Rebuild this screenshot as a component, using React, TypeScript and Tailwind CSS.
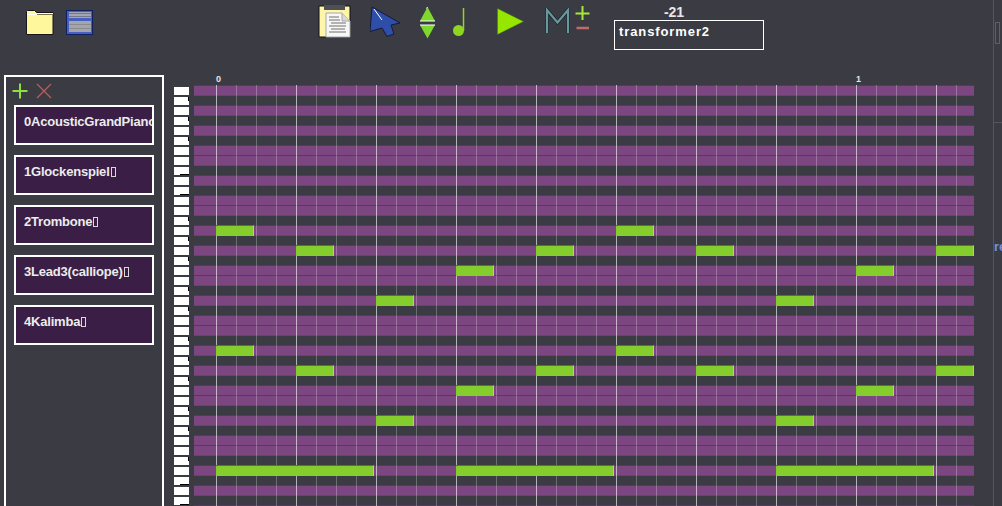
type Note = { row: number; start: number; len: number };

const tracks = [
  "0AcousticGrandPiano",
  "1Glockenspiel",
  "2Trombone",
  "3Lead3(calliope)",
  "4Kalimba",
];

// one octave of the roll, top down; true = playable row
const octave = [true, false, true, false, true, false, true, true, false, true, false, true];
const rows = Array.from({ length: 43 }, (_, i) => octave[i % 12]);

// start and len are in 20px grid cells from the "0" bar line
const notes: Note[] = [
  { row: 14, start: 0, len: 2 },
  { row: 14, start: 20, len: 2 },
  { row: 16, start: 4, len: 2 },
  { row: 16, start: 16, len: 2 },
  { row: 16, start: 24, len: 2 },
  { row: 16, start: 36, len: 2 },
  { row: 18, start: 12, len: 2 },
  { row: 18, start: 32, len: 2 },
  { row: 21, start: 8, len: 2 },
  { row: 21, start: 28, len: 2 },
  { row: 26, start: 0, len: 2 },
  { row: 26, start: 20, len: 2 },
  { row: 28, start: 4, len: 2 },
  { row: 28, start: 16, len: 2 },
  { row: 28, start: 24, len: 2 },
  { row: 28, start: 36, len: 2 },
  { row: 30, start: 12, len: 2 },
  { row: 30, start: 32, len: 2 },
  { row: 33, start: 8, len: 2 },
  { row: 33, start: 28, len: 2 },
  { row: 38, start: 0, len: 8 },
  { row: 38, start: 12, len: 8 },
  { row: 38, start: 28, len: 8 },
];

// small black marks left on the piano keys
const sideMarks = [1, 3, 5, 13, 15, 17, 20, 22, 25, 27, 29, 32, 34, 37];
const lowMarks = [8, 10, 39, 41];

function FolderIcon() {
  return (
    <svg width="28" height="25" viewBox="0 0 28 25" className="mt-[10px] ml-[26px] shrink-0">
      <path d="M0.500 24.500V1.500l1-1h7l2 2h16.500v22z" fill="#fff79c" stroke="#15151a" strokeWidth="1" />
      <path d="M1 4.500h8l2-1h16" fill="none" stroke="#fff" strokeWidth="1" />
      <path d="M11 4.500h16" stroke="#77704a" strokeWidth="1" />
    </svg>
  );
}

function SaveIcon() {
  return (
    <svg width="27" height="25" viewBox="0 0 27 25" className="mt-[10px] ml-[12px] shrink-0">
      <rect x="0.500" y="0.500" width="26" height="24" fill="#4560c0" stroke="#0e2060" />
      <rect x="3" y="2" width="22" height="6" fill="#a2a6b4" />
      <path d="M3 3.500h22M3 6.500h22" stroke="#747888" strokeWidth="1" />
      <rect x="3" y="11" width="22" height="11" fill="#a4a4ac" />
      <path d="M3 14.500h22M3 18.500h22" stroke="#8a8a92" strokeWidth="1" />
    </svg>
  );
}

function ClipboardIcon() {
  return (
    <svg width="33" height="33" viewBox="0 0 33 33" className="mt-[5px] ml-[225px] shrink-0">
      <path d="M1 1h31v31H1z" fill="#fdf6a8" stroke="#111" strokeWidth="1" />
      <rect x="6" y="0" width="21" height="5" fill="#4f5056" />
      <path d="M8 8h16l8 8v16H8z" fill="#f7f7f7" stroke="#a8a8a8" strokeWidth="1" />
      <path d="M24 8v8h8" fill="#d8d8d8" stroke="#a8a8a8" strokeWidth="1" />
      <path d="M11 12h10M11 15h11M13 18h15M11 21h17M13 24h14M11 27h17" stroke="#6f6f6f" strokeWidth="1" />
    </svg>
  );
}

function PointerIcon() {
  return (
    <svg width="31" height="31" viewBox="0 0 31 31" className="mt-[6px] ml-[19px] shrink-0">
      <path d="M2 1l28 16-9 2 3 9-7 2.500-5-8.500-12 3.500z" fill="#2f4ea8" stroke="#131a3c" strokeWidth="1" />
      <path d="M4 3l8 11" stroke="#fff" strokeWidth="1" />
    </svg>
  );
}

function UpDownIcon() {
  return (
    <svg width="17" height="33" viewBox="0 0 17 33" className="mt-[6px] ml-[18px] shrink-0">
      <path d="M8.500 1L16 15H1z" fill="#7fd82c" />
      <path d="M1 15h15M8.500 1l-1 1.500" stroke="#fff" strokeWidth="1" />
      <path d="M1 19h15L8.500 32.500z" fill="#7fd82c" />
      <path d="M1 19h15" stroke="#fff" strokeWidth="1" />
    </svg>
  );
}

function NoteIcon() {
  return (
    <svg width="17" height="29" viewBox="0 0 17 29" className="mt-[8px] ml-[15px] shrink-0">
      <circle cx="7.500" cy="22.500" r="5.500" fill="#8fd620" />
      <path d="M12.500 0v23" stroke="#8fd620" strokeWidth="1.500" />
    </svg>
  );
}

function PlayIcon() {
  return (
    <svg width="27" height="27" viewBox="0 0 27 27" className="mt-[8px] ml-[29px] shrink-0">
      <path d="M0.500 0.500L26.500 13.500L0.500 26.500z" fill="#96e600" stroke="#3f7a10" strokeWidth="0.500" />
    </svg>
  );
}

function MuteIcon() {
  return (
    <svg width="25" height="25" viewBox="0 0 25 25" className="mt-[8px] ml-[21px] shrink-0">
      <path d="M2 25V2L12.500 14.500L23 2V25" fill="none" stroke="#16242a" strokeWidth="3.500" />
      <path d="M2 25V2L12.500 14.500L23 2V25" fill="none" stroke="#67989f" strokeWidth="2.200" />
    </svg>
  );
}

function PlusMinusIcon() {
  return (
    <svg width="15" height="25" viewBox="0 0 15 25" className="mt-[6px] ml-[5px] shrink-0">
      <path d="M7.500 0v14M0.500 7.500h14" stroke="#a5e838" strokeWidth="2" />
      <path d="M1.500 22h12.500" stroke="#c26a6a" strokeWidth="2.500" />
    </svg>
  );
}

function PianoKeys() {
  return (
    <div className="mt-[10px] ml-[10px] flex w-[15px] shrink-0 flex-col">
      {rows.map((_, i) => (
        <div key={i} className="h-[10px] pt-[2px]">
          <div
            className={`flex h-[8px] justify-end bg-white ${lowMarks.includes(i) ? "items-end" : "items-start"}`}
          >
            {sideMarks.includes(i) && <span className="h-[4px] w-[1px] bg-black" />}
            {lowMarks.includes(i) && <span className="h-[1px] w-[9px] bg-black" />}
          </div>
        </div>
      ))}
    </div>
  );
}

function PianoRoll() {
  return (
    <div className="ml-[5px] w-[780px] shrink-0">
      <div className="flex h-[10px] pl-[22px] text-[9px] leading-[9px] font-bold text-[#e6e6e6]">
        <span className="w-[640px]">0</span>
        <span>1</span>
      </div>
      <div className="grid overflow-hidden">
        <div className="[grid-area:1/1] flex flex-col">
          {rows.map((on, i) => (
            <div
              key={i}
              className={`h-[10px] border-t ${on ? "border-t-[#563a5e] bg-[#7c4680]" : "border-t-[#5c4a66]"}`}
            />
          ))}
        </div>
        <div className="[grid-area:1/1] flex pl-[22px]">
          {Array.from({ length: 38 }, (_, i) => (
            <div
              key={i}
              className={`w-[20px] shrink-0 border-l ${i % 4 === 0 ? "border-white/60" : "border-white/25"}`}
            />
          ))}
        </div>
        <div className="[grid-area:1/1] flex flex-col">
          {rows.map((_, i) => (
            <div key={i} className="grid h-[10px] grid-cols-[repeat(38,20px)] pl-[22px]">
              {notes
                .filter((n) => n.row === i)
                .map((n) => (
                  <div
                    key={n.start}
                    className="mr-[2px] h-[11px] border-t border-r border-t-[#4a7f20] border-r-[#b4cc90] bg-[#85cd2c]"
                    style={{ gridColumn: `${n.start + 1} / span ${n.len}` }}
                  />
                ))}
            </div>
          ))}
        </div>
      </div>
    </div>
  );
}

export default function App() {
  return (
    <div className="flex h-[506px] w-[1002px] overflow-hidden bg-[#3b3c43] [font-family:'Liberation_Sans',Arial,sans-serif] text-white">
      <div className="w-[993px] shrink-0">
        <div className="flex h-[75px] items-start">
          <FolderIcon />
          <SaveIcon />
          <ClipboardIcon />
          <PointerIcon />
          <UpDownIcon />
          <NoteIcon />
          <PlayIcon />
          <MuteIcon />
          <PlusMinusIcon />
          <div className="ml-[24px] w-[150px] shrink-0">
            <div className="h-[20px] pt-[4px] pr-[30px] text-center text-[14px] leading-[16px] font-bold text-[#e8e8e8]">
              -21
            </div>
            <div className="h-[30px] border-[1.5px] border-white pt-[3px] pl-[4px] text-[13px] leading-[16px] font-bold tracking-[0.9px]">
              transformer2
            </div>
          </div>
        </div>
        <div className="flex">
          <div className="ml-[4px] h-[440px] w-[160px] shrink-0 border-2 border-white">
            <div className="flex h-[28px] items-start pt-[6px] pl-[6px]">
              <svg width="16" height="16" viewBox="0 0 16 16" className="shrink-0">
                <path d="M8 0.500v15M0.500 8h15" stroke="#8ee03a" strokeWidth="2" />
              </svg>
              <svg width="16" height="16" viewBox="0 0 16 16" className="ml-[8px] shrink-0">
                <path d="M1 1l14 14M15 1L1 15" stroke="#b85c5c" strokeWidth="1.300" />
              </svg>
            </div>
            <div className="flex flex-col gap-[10px] pl-[8px]">
              {tracks.map((name, i) => (
                <div
                  key={name}
                  className="h-[40px] w-[140px] overflow-hidden border-2 border-white bg-[#3a1e45] pt-[7px] pl-[8px] text-[13px] leading-[15px] font-bold tracking-[-0.2px] whitespace-nowrap text-[#ececec]"
                >
                  {name}
                  {i > 0 && (
                    <span className="ml-[1px] inline-block h-[10px] w-[5px] border border-[#d8d8d8] align-[-1px]" />
                  )}
                </div>
              ))}
            </div>
          </div>
          <PianoKeys />
          <PianoRoll />
        </div>
      </div>
      <div className="w-[9px] shrink-0 overflow-hidden border-l border-[#55565c]">
        <div className="mt-[22px] ml-[1px] h-[22px] w-[5px] border border-[#5f6066]" />
        <div className="mt-[78px] h-[1px] bg-[#55565c]" />
        <div className="mt-[116px] text-[13px] leading-[16px] font-bold text-[#6f92d8]">re</div>
      </div>
    </div>
  );
}
